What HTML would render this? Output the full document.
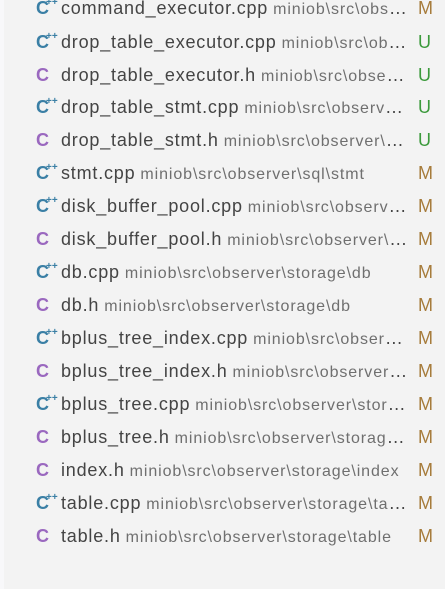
<!DOCTYPE html><html><head><style>
body{margin:0;width:445px;height:589px;background:#f3f3f3;font-family:"Liberation Sans",sans-serif;overflow:hidden;position:relative}
.strip{position:absolute;left:0;top:0;width:4px;height:589px;background:#f8f8fa}
.row{position:absolute;left:0;width:445px;height:33px}
.ic{position:absolute;left:36px;top:0;width:20px;font-weight:bold;font-size:18px;line-height:33px}
.cpp{color:#3a7fa5}.h{color:#9a68bf}
.cpp sup{font-size:10px;position:absolute;left:10px;top:-6px}
.wrap{position:absolute;left:61px;width:349px;overflow:hidden;white-space:nowrap;text-overflow:ellipsis;line-height:33px;font-size:18px;letter-spacing:0.8px;color:#444}
.p{font-size:16px;color:#6f6f6f;margin-left:5px;letter-spacing:0.9px}
.s{position:absolute;left:418px;font-size:18px;line-height:33px}
.M{color:#a67b3a}.U{color:#3c9a3c}
</style></head><body><div class="strip"></div>
<div class="row" style="top:-8px"><span class="ic cpp">C<sup>++</sup></span><span class="wrap">command_executor.cpp<span class="p">miniob\src\observer\sql\executor</span></span><span class="s M">M</span></div>
<div class="row" style="top:26px"><span class="ic cpp">C<sup>++</sup></span><span class="wrap">drop_table_executor.cpp<span class="p">miniob\src\observer\sql\executor</span></span><span class="s U">U</span></div>
<div class="row" style="top:59px"><span class="ic h">C</span><span class="wrap">drop_table_executor.h<span class="p">miniob\src\observer\sql\executor</span></span><span class="s U">U</span></div>
<div class="row" style="top:91px"><span class="ic cpp">C<sup>++</sup></span><span class="wrap">drop_table_stmt.cpp<span class="p">miniob\src\observer\sql\stmt</span></span><span class="s U">U</span></div>
<div class="row" style="top:124px"><span class="ic h">C</span><span class="wrap">drop_table_stmt.h<span class="p">miniob\src\observer\sql\stmt</span></span><span class="s U">U</span></div>
<div class="row" style="top:157px"><span class="ic cpp">C<sup>++</sup></span><span class="wrap">stmt.cpp<span class="p">miniob\src\observer\sql\stmt</span></span><span class="s M">M</span></div>
<div class="row" style="top:190px"><span class="ic cpp">C<sup>++</sup></span><span class="wrap">disk_buffer_pool.cpp<span class="p">miniob\src\observer\storage\buffer</span></span><span class="s M">M</span></div>
<div class="row" style="top:223px"><span class="ic h">C</span><span class="wrap">disk_buffer_pool.h<span class="p">miniob\src\observer\storage\buffer</span></span><span class="s M">M</span></div>
<div class="row" style="top:256px"><span class="ic cpp">C<sup>++</sup></span><span class="wrap">db.cpp<span class="p">miniob\src\observer\storage\db</span></span><span class="s M">M</span></div>
<div class="row" style="top:289px"><span class="ic h">C</span><span class="wrap">db.h<span class="p">miniob\src\observer\storage\db</span></span><span class="s M">M</span></div>
<div class="row" style="top:322px"><span class="ic cpp">C<sup>++</sup></span><span class="wrap">bplus_tree_index.cpp<span class="p">miniob\src\observer\storage\index</span></span><span class="s M">M</span></div>
<div class="row" style="top:355px"><span class="ic h">C</span><span class="wrap">bplus_tree_index.h<span class="p">miniob\src\observer\storage\index</span></span><span class="s M">M</span></div>
<div class="row" style="top:388px"><span class="ic cpp">C<sup>++</sup></span><span class="wrap">bplus_tree.cpp<span class="p">miniob\src\observer\storage\index</span></span><span class="s M">M</span></div>
<div class="row" style="top:421px"><span class="ic h">C</span><span class="wrap">bplus_tree.h<span class="p">miniob\src\observer\storage\index</span></span><span class="s M">M</span></div>
<div class="row" style="top:454px"><span class="ic h">C</span><span class="wrap">index.h<span class="p">miniob\src\observer\storage\index</span></span><span class="s M">M</span></div>
<div class="row" style="top:487px"><span class="ic cpp">C<sup>++</sup></span><span class="wrap">table.cpp<span class="p">miniob\src\observer\storage\table</span></span><span class="s M">M</span></div>
<div class="row" style="top:520px"><span class="ic h">C</span><span class="wrap">table.h<span class="p">miniob\src\observer\storage\table</span></span><span class="s M">M</span></div>
</body></html>
